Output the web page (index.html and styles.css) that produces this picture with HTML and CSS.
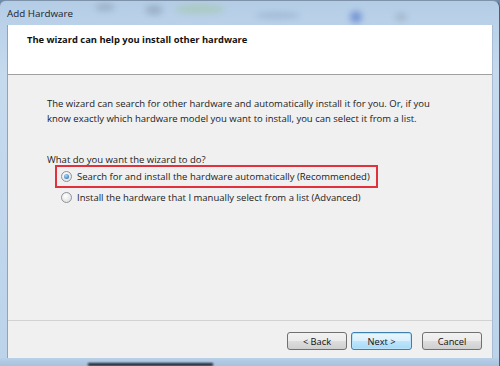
FILE: index.html
```html
<!DOCTYPE html>
<html>
<head>
<meta charset="utf-8">
<link rel="stylesheet" href="styles.css">
</head>
<body>
<div class="window">
  <div class="titlebar">
    <span class="title">Add Hardware</span>
    <div class="glass">
      <span class="blob b1"></span><span class="blob b2"></span><span class="blob b3"></span><span class="blob b4"></span><span class="blob b5"></span><span class="blob b6"></span>
    </div>
  </div>
  <div class="client">
    <div class="header">
      <div class="header-title">The wizard can help you install other hardware</div>
    </div>
    <div class="body">
      <p class="intro">The wizard can search for other hardware and automatically install it for you. Or, if you<br>know exactly which hardware model you want to install, you can select it from a list.</p>
      <p class="question">What do you want the wizard to do?</p>
      <div class="options">
        <label class="option highlight"><span class="radio checked"></span>Search for and install the hardware automatically (Recommended)</label>
        <label class="option"><span class="radio"></span>Install the hardware that I manually select from a list (Advanced)</label>
      </div>
    </div>
    <div class="footer">
      <div class="btn-group">
        <button class="btn">&lt; Back</button>
        <button class="btn default">Next &gt;</button>
      </div>
      <button class="btn">Cancel</button>
    </div>
  </div>
  <div class="bottom-frame"><span class="taskshadow"></span></div>
</div>
</body>
</html>
```

FILE: styles.css
```css
html, body {
  margin: 0;
  padding: 0;
  width: 500px;
  height: 366px;
  overflow: hidden;
  background: #6f8aa8;
}
.window {
  width: 500px;
  height: 366px;
  box-sizing: border-box;
  display: flex;
  flex-direction: column;
  background: linear-gradient(180deg, #b4cde6 0%, #c6daee 20%, #bcd3ea 100%);
  border-top-right-radius: 7px;
  border-top-left-radius: 6px;
  border-top: 1px solid #7e93aa;
  border-right: 1px solid #4a5e76;
  font-family: "Open Sans", "Noto Sans", sans-serif;
  color: #000;
}
.titlebar {
  height: 24px;
  position: relative;
  display: flex;
  align-items: center;
  padding-left: 7px;
  overflow: hidden;
}
.title {
  font-size: 9.8px;
  color: #1a2330;
  position: relative;
  z-index: 2;
}
.glass {
  position: absolute;
  inset: 0;
  z-index: 1;
}
.blob {
  position: absolute;
  border-radius: 50%;
  filter: blur(3px);
  opacity: 0.45;
}
.b1 { left: 95px; top: 2px; width: 20px; height: 8px; background: #7d8fa6; }
.b2 { left: 145px; top: 4px; width: 18px; height: 10px; background: #7a8ca2; }
.b3 { left: 175px; top: 3px; width: 50px; height: 10px; background: #9fc49a; }
.b4 { left: 350px; top: 10px; width: 12px; height: 12px; background: #4a6ec8; opacity: 0.6; }
.b5 { left: 255px; top: 11px; width: 45px; height: 7px; background: #8aa4c4; }
.b6 { left: 395px; top: 12px; width: 12px; height: 8px; background: #8a98aa; }
.client {
  margin: 0 6px 0 7px;
  flex: 1;
  display: flex;
  flex-direction: column;
  background: #f0f0f0;
  border-left: 1px solid #8ea4bd;
  border-right: 1px solid #a8bdd3;
}
.header {
  height: 50px;
  background: #fff;
  border-bottom: 1px solid #a0a0a0;
  padding: 8px 0 0 19px;
  box-sizing: border-box;
}
.header-title {
  font-weight: bold;
  font-size: 9.4px;
  line-height: 14px;
  color: #111;
}
.body {
  flex: 1;
  padding: 21px 0 0 39px;
  font-size: 9.5px;
  line-height: 15px;
  color: #1a1a1a;
}
.intro {
  margin: 0;
  white-space: nowrap;
}
.question {
  margin: 26px 0 0 0;
}
.options {
  margin-left: 8px;
  display: flex;
  flex-direction: column;
  align-items: flex-start;
}
.option {
  display: flex;
  align-items: center;
  height: 18px;
  padding: 0 6px 0 4px;
  border: 2px solid transparent;
  box-sizing: border-box;
}
.option.highlight {
  border-color: #e0313d;
  height: 23px;
  margin-top: -2px;
}
.radio {
  width: 9px;
  height: 9px;
  border-radius: 50%;
  border: 1px solid #8e9399;
  background: radial-gradient(circle at 40% 35%, #ffffff, #d8d8d8);
  margin-right: 5px;
  flex: none;
  position: relative;
}
.radio.checked::after {
  content: "";
  position: absolute;
  left: 2px;
  top: 2px;
  width: 5px;
  height: 5px;
  border-radius: 50%;
  background: radial-gradient(circle at 40% 35%, #a6dcff, #1d5f9c);
}
.footer {
  height: 38px;
  border-top: 1px solid #d2d2d2;
  display: flex;
  justify-content: flex-end;
  align-items: flex-start;
  padding: 11px 10px 0 0;
  box-sizing: border-box;
  gap: 10px;
}
.btn-group {
  display: flex;
  gap: 4px;
}
.btn {
  width: 60px;
  height: 18px;
  font-family: "Open Sans", "Noto Sans", sans-serif;
  font-size: 9.3px;
  padding: 0;
  border: 1px solid #707070;
  border-radius: 3px;
  background: linear-gradient(180deg, #f2f2f2 0%, #ebebeb 50%, #dddddd 51%, #cfcfcf 100%);
  color: #111;
}
.btn.default {
  width: 61px;
  border-color: #3c7fb1;
  background: linear-gradient(180deg, #eaf6fd 0%, #d9f0fc 50%, #bee6fd 51%, #a7d9f5 100%);
  box-shadow: inset 0 0 0 1px #b8e3fa;
}
.bottom-frame {
  height: 8px;
  position: relative;
  background: linear-gradient(180deg, #b8d0e8, #a8c2dc);
}
.taskshadow {
  position: absolute;
  left: 88px;
  width: 125px;
  bottom: 0;
  height: 3px;
  background: #1c2430;
  filter: blur(1px);
}
```
